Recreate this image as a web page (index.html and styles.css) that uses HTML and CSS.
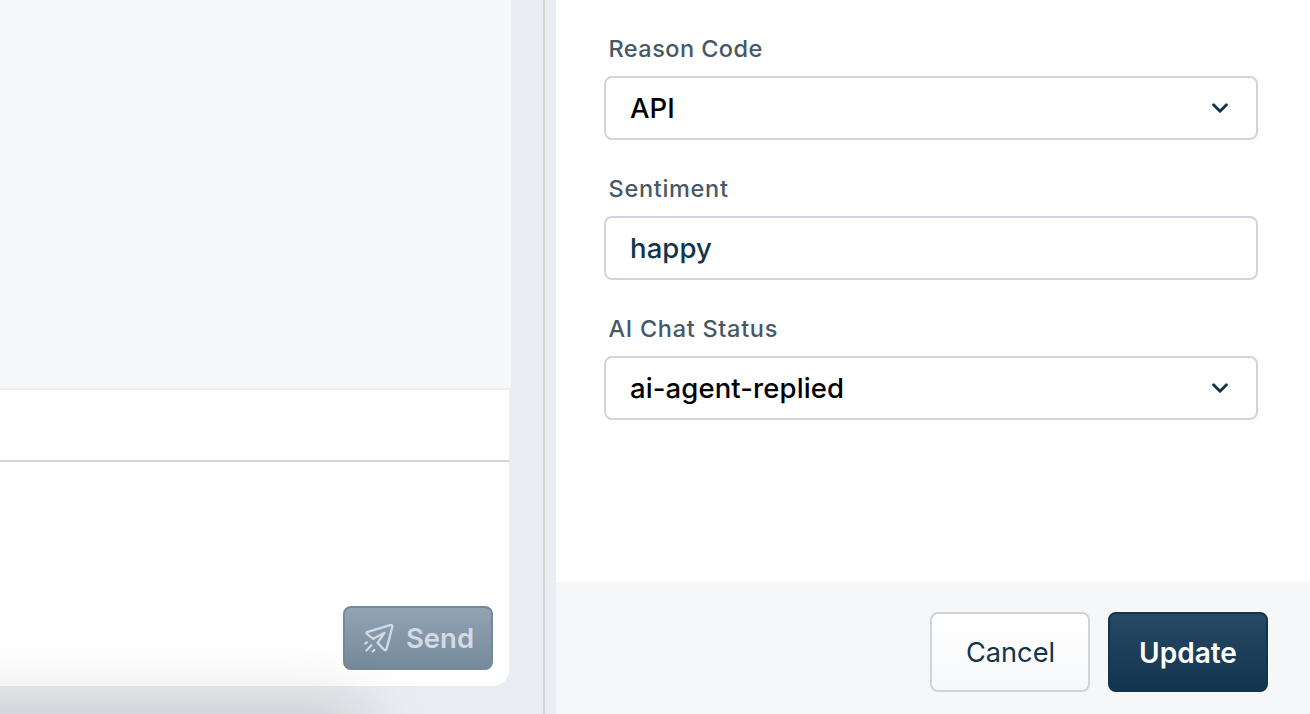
FILE: index.html
```html
<!DOCTYPE html>
<html lang="en">
<head>
<meta charset="utf-8">
<title>Conversation</title>
<link rel="stylesheet" href="styles.css">
</head>
<body>
<div class="app">
  <main class="chat">
    <div class="messages"></div>
    <section class="composer">
      <div class="toolbar"></div>
      <div class="editor">
        <button class="btn send" disabled>
          <svg class="plane" viewBox="0 0 30 32" fill="none" stroke="currentColor" stroke-width="2.3" stroke-linecap="round" stroke-linejoin="round"><path d="M9.3 16.8 3.2 12.2Q1.4 10.7 3.8 9.9L26.2 3.2Q28.8 2.5 28.3 5L22.6 26.6Q21.8 29.5 19.7 27.2L13.5 20.8 20.5 10.8 9.3 16.8M1.3 21.6 2.8 20.4M2.5 28.5 7.3 23.2M8.7 29.5 10.3 28"/></svg>
          <span>Send</span>
        </button>
      </div>
    </section>
    <div class="shade"></div>
  </main>
  <div class="gutter"></div>
  <aside class="panel">
    <form class="fields">
      <label class="label reason">Reason Code</label>
      <div class="control"><span>API</span><svg class="chevron" viewBox="0 0 20 14"><path d="M3.5 3.8 10 10.3 16.5 3.8"/></svg></div>
      <label class="label">Sentiment</label>
      <div class="control text-input"><span>happy</span></div>
      <label class="label">AI Chat Status</label>
      <div class="control status"><span>ai-agent-replied</span><svg class="chevron" viewBox="0 0 20 14"><path d="M3.5 3.8 10 10.3 16.5 3.8"/></svg></div>
    </form>
    <footer class="actions">
      <button class="btn cancel">Cancel</button>
      <button class="btn update">Update</button>
    </footer>
  </aside>
</div>
</body>
</html>
```
FILE: styles.css
```css
* { box-sizing: border-box; }
body { margin: 0; font-family: Inter, sans-serif; overflow: hidden; }
.app { display: flex; width: 1310px; height: 714px; background: #eaeef2; }
.chat { position: relative; width: 511px; overflow: hidden; }
.messages { height: 388px; background: #f5f7f9; }
.composer { width: 509px; height: 298px; background: #fff; border-radius: 0 0 16px 0; }
.toolbar { height: 74px; border-top: 2px solid #eceff1; border-bottom: 2px solid #d0d5da; }
.editor { height: 224px; padding: 0 16px 16px 0; display: flex; justify-content: flex-end; align-items: flex-end; }
.shade { position: absolute; left: -80px; top: 718px; height: 50px; width: 435px; box-shadow: 0 0 70px 10px rgba(0, 0, 0, .18); }
.gutter { width: 45px; padding-left: 32px; }
.gutter::before { content: ""; display: block; width: 2px; height: 100%; background: #d0d5da; }
.panel { width: 754px; background: #fff; display: flex; flex-direction: column; }
.fields { height: 582px; padding: 34px 52px 0 48px; }
.label { display: block; height: 42px; padding-left: 4.5px; font-size: 23.5px; line-height: 30px; font-weight: 500; letter-spacing: .7px; color: #475867; }
.reason { letter-spacing: .45px; }
.control { display: flex; align-items: center; justify-content: space-between; width: 654px; height: 64px; margin-bottom: 34px; padding: 0 26px 0 24px; border: 2px solid #d0d5dd; border-radius: 8px; font-size: 27.5px; line-height: 34px; font-weight: 500; letter-spacing: .1px; color: #000; }
.text-input { color: #12344d; }
.chevron { width: 20px; height: 14px; fill: none; stroke: #12344d; stroke-width: 2.9; stroke-linecap: round; stroke-linejoin: round; }
.actions { flex: 1; display: flex; gap: 18px; justify-content: flex-end; padding: 30px 42px 0; background: #f5f7f9; }
.btn { display: flex; align-items: center; justify-content: center; padding: 0; font: 500 28px/34px Inter, sans-serif; border-radius: 8px; border: 2px solid; }
.send { width: 150px; height: 64px; gap: 12px; padding: 0 0 0 2px; color: #d0dbe5; border-color: #76899a; background: linear-gradient(#92a3b2, #778b9c); font-size: 27.5px; font-weight: 600; }
.plane { width: 30px; height: 32px; }
.cancel, .update { width: 160px; height: 80px; }
.cancel { padding: 1px 0 0 1px; color: #12344d; border-color: #cfd4d9; background: linear-gradient(#fff, #f7f8fa); font-size: 27.2px; font-weight: 400; }
.update { padding-top: 1px; color: #fff; border-color: #12344d; background: linear-gradient(#264966, #12344d); font-weight: 600; }
```
